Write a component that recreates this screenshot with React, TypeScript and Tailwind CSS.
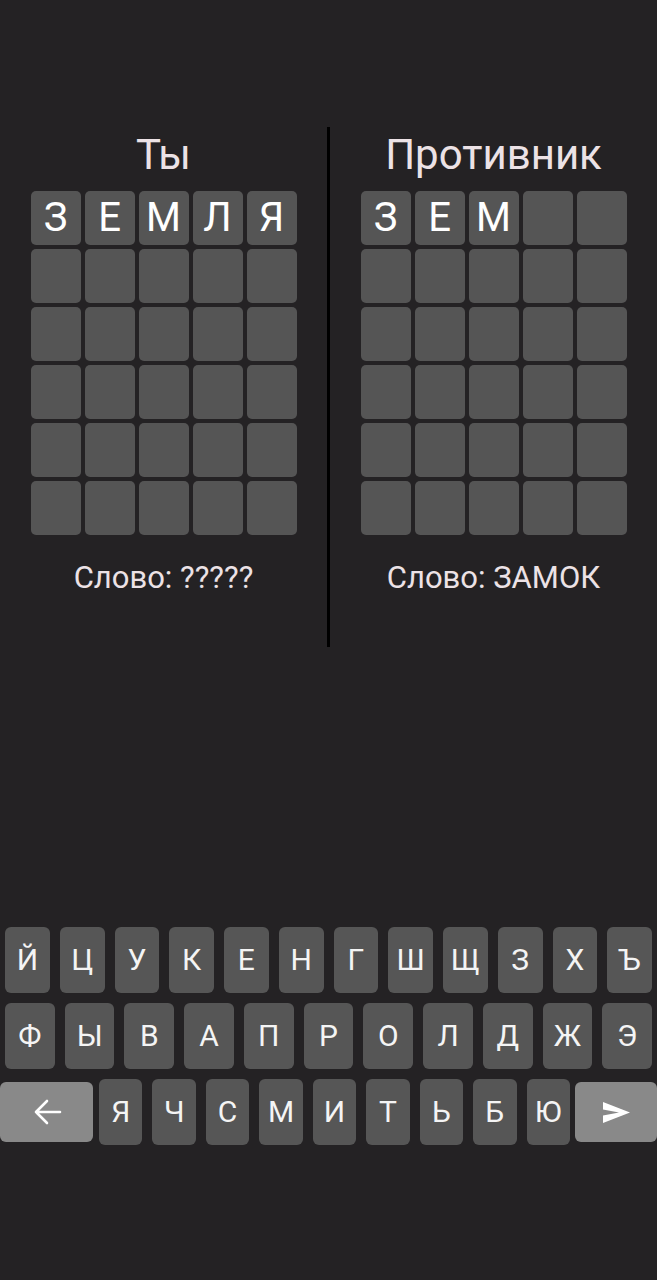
import React from "react";

const row1 = ["Й", "Ц", "У", "К", "Е", "Н", "Г", "Ш", "Щ", "З", "Х", "Ъ"];
const row2 = ["Ф", "Ы", "В", "А", "П", "Р", "О", "Л", "Д", "Ж", "Э"];
const row3 = ["Я", "Ч", "С", "М", "И", "Т", "Ь", "Б", "Ю"];

function Grid({ first }: { first: string[] }) {
  const rows = 6;
  const cells: string[] = [];
  for (let r = 0; r < rows; r++) {
    for (let c = 0; c < 5; c++) {
      cells.push(r === 0 ? first[c] ?? "" : "");
    }
  }
  return (
    <div className="grid grid-cols-[repeat(5,50px)] auto-rows-[54px] gap-[4px] mt-[12px]">
      {cells.map((ch, i) => (
        <div
          key={i}
          className="bg-[#555555] rounded-[5px] flex items-center justify-center text-white text-[40px] leading-none"
        >
          {ch}
        </div>
      ))}
    </div>
  );
}

function Column({ title, first, word }: { title: string; first: string[]; word: string }) {
  return (
    <div className="flex-1 flex flex-col items-center">
      <div className="mt-[4px] text-[42px] leading-[48px] text-[#ece2e6]">{title}</div>
      <Grid first={first} />
      <div className="mt-[25px] text-[31px] leading-[36px] text-[#ece2e6]">{word}</div>
    </div>
  );
}

function Key({ ch }: { ch: string }) {
  return (
    <div className="flex-1 h-[66px] bg-[#565656] rounded-[6px] flex items-center justify-center text-[30px] leading-none text-[#f4f4f4]">
      {ch}
    </div>
  );
}

export default function App() {
  return (
    <div
      className="w-full h-[1280px] bg-[#242224] flex flex-col overflow-hidden"
      style={{ fontFamily: "Roboto, 'Noto Sans', sans-serif" }}
    >
      <div className="mt-[127px] h-[520px] flex">
        <Column title="Ты" first={["З", "Е", "М", "Л", "Я"]} word="Слово: ?????" />
        <div className="w-[3px] bg-black" />
        <Column title="Противник" first={["З", "Е", "М"]} word="Слово: ЗАМОК" />
      </div>

      <div className="mt-[280px] flex flex-col gap-[10px]">
        <div className="flex gap-[10px] px-[5px]">
          {row1.map((c) => (
            <Key key={c} ch={c} />
          ))}
        </div>
        <div className="flex gap-[10px] px-[5px]">
          {row2.map((c) => (
            <Key key={c} ch={c} />
          ))}
        </div>
        <div className="flex items-center">
          <div className="w-[93px] h-[60px] bg-[#898989] rounded-[6px] flex items-center justify-center">
            <svg width="30" height="30" viewBox="0 0 30 30" fill="none">
              <path
                d="M28 15H4M15 4L4 15L15 26"
                stroke="#ffffff"
                strokeWidth="2.6"
                strokeLinecap="round"
                strokeLinejoin="round"
              />
            </svg>
          </div>
          <div className="flex-1 flex gap-[10px] ml-[6px] mr-[5px]">
            {row3.map((c) => (
              <Key key={c} ch={c} />
            ))}
          </div>
          <div className="w-[82px] h-[60px] bg-[#898989] rounded-[6px] flex items-center justify-center">
            <svg width="27" height="21" viewBox="0 0 27 21">
              <path d="M0 0L27 10.5L0 21L0 13.5L16 10.5L0 7.5Z" fill="#ffffff" />
            </svg>
          </div>
        </div>
      </div>
    </div>
  );
}
